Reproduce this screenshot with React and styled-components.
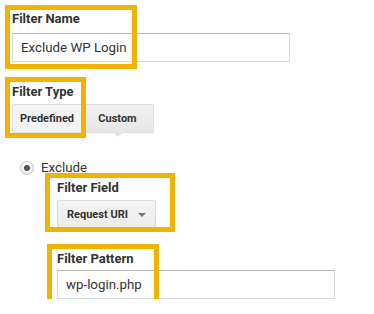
import React from "react";
import styled, { createGlobalStyle } from "styled-components";

const Global = createGlobalStyle`
  html, body { margin: 0; padding: 0; background: #fff; }
  body { font-family: Roboto, "Liberation Sans", Arial, sans-serif; color: #333; }
`;

const Page = styled.div`
  display: flex;
  flex-direction: column;
  align-items: flex-start;
  padding: 10px 0 0 12px;
`;

const Field = styled.div`
  position: relative;
  display: flex;
  flex-direction: column;
  align-items: flex-start;
  margin-top: ${(p) => p.$mt || 0}px;
`;

const Label = styled.div`
  font-size: 13px;
  line-height: 17px;
  font-weight: 700;
  color: #333;
  margin-bottom: ${(p) => p.$gap}px;
`;

const TextInput = styled.div`
  box-sizing: border-box;
  width: 278px;
  height: 29px;
  border: 1px solid #d9d9d9;
  border-top-color: #b9b9b9;
  background: #fff;
  padding: 0 8px;
  display: flex;
  align-items: center;
  font-size: 13.3px;
  color: #333;
`;

const Segments = styled.div`
  display: flex;
`;

const Segment = styled.div`
  position: relative;
  box-sizing: border-box;
  width: ${(p) => p.$w}px;
  height: 29px;
  display: flex;
  align-items: center;
  justify-content: center;
  font-size: 11px;
  font-weight: 700;
  color: #333;
  border: 1px solid #dcdcdc;
  background: ${(p) => (p.$active ? "linear-gradient(#f1f1f1, #e6e6e6)" : "#f3f3f3")};
  border-radius: ${(p) => (p.$first ? "2px 0 0 2px" : "0 2px 2px 0")};
  ${(p) => (p.$first ? "" : "border-left: none;")}
`;

const Pointer = styled.span`
  position: absolute;
  left: 50%;
  bottom: -5px;
  margin-left: -5px;
  width: 0;
  height: 0;
  border-left: 5px solid transparent;
  border-right: 5px solid transparent;
  border-top: 5px solid #e3e3e3;
`;

const RadioRow = styled.label`
  display: flex;
  align-items: center;
  gap: 7px;
  margin: 26px 0 0 8px;
  font-size: 13.3px;
  line-height: 17px;
  color: #333;
`;

const Radio = styled.span`
  box-sizing: border-box;
  width: 14px;
  height: 14px;
  border-radius: 50%;
  border: 1px solid #c4c4c4;
  background: linear-gradient(#fafafa, #ececec);
  display: flex;
  align-items: center;
  justify-content: center;
  &::after {
    content: "";
    width: 6px;
    height: 6px;
    border-radius: 50%;
    background: #555;
  }
`;

const SubSection = styled.div`
  display: flex;
  flex-direction: column;
  align-items: flex-start;
  padding-left: 45px;
`;

const Dropdown = styled.div`
  box-sizing: border-box;
  width: 99px;
  height: 28px;
  display: flex;
  align-items: center;
  justify-content: space-between;
  padding: 0 9px 0 9px;
  border: 1px solid #dcdcdc;
  border-radius: 2px;
  background: linear-gradient(#f3f3f3, #ececec);
  font-size: 11px;
  font-weight: 700;
  color: #333;
`;

const Caret = styled.span`
  width: 0;
  height: 0;
  border-left: 4px solid transparent;
  border-right: 4px solid transparent;
  border-top: 4px solid #777;
  margin-top: 2px;
`;

const Highlight = styled.div`
  position: absolute;
  pointer-events: none;
  box-sizing: border-box;
  border: 5px solid #f0b400;
  left: ${(p) => p.$l}px;
  top: ${(p) => p.$t}px;
  width: ${(p) => p.$w}px;
  height: ${(p) => p.$h}px;
`;

export default function App() {
  return (
    <>
      <Global />
      <Page>
        <Field>
          <Label $gap={6}>Filter Name</Label>
          <TextInput>Exclude WP Login</TextInput>
          <Highlight $l={-7} $t={-5} $w={132} $h={64} />
        </Field>
        <Field $mt={21}>
          <Label $gap={4}>Filter Type</Label>
          <Segments>
            <Segment $first $w={70}>Predefined</Segment>
            <Segment $active $w={72}>
              Custom
              <Pointer />
            </Segment>
          </Segments>
          <Highlight $l={-7} $t={-6} $w={81} $h={61} />
        </Field>
        <RadioRow>
          <Radio />
          Exclude
        </RadioRow>
        <SubSection>
          <Field $mt={3}>
            <Label $gap={4}>Filter Field</Label>
            <Dropdown>
              Request URI
              <Caret />
            </Dropdown>
            <Highlight $l={-12} $t={-6} $w={130} $h={59} />
          </Field>
          <Field $mt={22}>
            <Label $gap={3}>Filter Pattern</Label>
            <TextInput>wp-login.php</TextInput>
            <Highlight $l={-10} $t={-6} $w={112} $h={62} />
          </Field>
        </SubSection>
      </Page>
    </>
  );
}
